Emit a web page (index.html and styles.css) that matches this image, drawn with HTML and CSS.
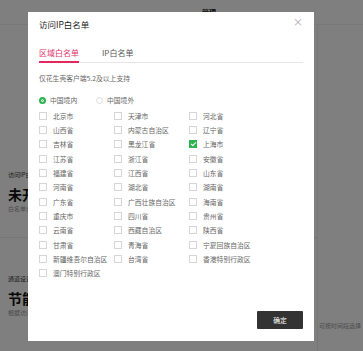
FILE: index.html
```html
<!DOCTYPE html>
<html lang="zh-CN">
<head>
  <meta charset="UTF-8" />
  <meta name="viewport" content="width=device-width, initial-scale=1" />
  <title>访问IP白名单</title>
  <link rel="stylesheet" href="styles.css">
</head>
<body>

  <div class="page">
    <header class="topbar">
      <span class="topbar-link">管理</span>
    </header>
    <div class="page-body">
      <main class="content">
        <section class="panel panel-first">
          <div class="panel-label">访问IP白名单</div>
          <div class="panel-value">未开启</div>
          <div class="panel-desc">白名单未开启</div>
        </section>
        <section class="panel">
          <div class="panel-label">通道设置</div>
          <div class="panel-value">节能模式</div>
          <div class="panel-desc">根据访问量调整</div>
        </section>
      </main>
      <aside class="side">
        <div class="side-desc">可按时间段选择</div>
      </aside>
    </div>
  </div>

  <div class="mask">
    <div class="modal">
      <div class="modal-head">
        <span class="modal-title">访问IP白名单</span>
        <span class="modal-close">×</span>
      </div>

      <div class="tabs">
        <span class="tab active">区域白名单</span>
        <span class="tab">IP白名单</span>
      </div>

      <p class="note">仅花生壳客户端5.2及以上支持</p>

      <div class="radios">
        <label class="radio checked"><i></i>中国境内</label>
        <label class="radio"><i></i>中国境外</label>
      </div>

      <div class="region-grid" id="regions"></div>

      <div class="modal-foot">
        <button class="btn">确定</button>
      </div>
    </div>
  </div>

  <script>
    // province list, filled row by row
    const regions = [
      '北京市', '天津市', '河北省',
      '山西省', '内蒙古自治区', '辽宁省',
      '吉林省', '黑龙江省', '上海市',
      '江苏省', '浙江省', '安徽省',
      '福建省', '江西省', '山东省',
      '河南省', '湖北省', '湖南省',
      '广东省', '广西壮族自治区', '海南省',
      '重庆市', '四川省', '贵州省',
      '云南省', '西藏自治区', '陕西省',
      '甘肃省', '青海省', '宁夏回族自治区',
      '新疆维吾尔自治区', '台湾省', '香港特别行政区',
      '澳门特别行政区'
    ];
    const selected = ['上海市'];

    const grid = document.getElementById('regions');
    regions.forEach(name => {
      const item = document.createElement('label');
      item.className = 'check' + (selected.includes(name) ? ' checked' : '');
      item.innerHTML = '<i></i><span></span>';
      item.querySelector('span').textContent = name;
      grid.appendChild(item);
    });
  </script>

</body>
</html>
```

FILE: styles.css
```css
body {
  margin: 0;
  font-family: "Noto Sans CJK SC", "Noto Sans", sans-serif;
  color: #333;
  background: #fff;
  width: 363px;
  height: 351px;
  overflow: hidden;
}

/* page behind the dialog */

.page {
  height: 351px;
  display: flex;
  flex-direction: column;
}

.topbar {
  height: 25px;
  border-bottom: 1px solid #f0f0f0;
  box-sizing: border-box;
  padding-left: 202px;
  display: flex;
  align-items: center;
}

.topbar-link {
  font-size: 7px;
  font-weight: 700;
  color: #222;
}

.page-body {
  flex: 1;
  display: flex;
}

.content {
  width: 317px;
  padding-top: 145px;
}

.panel {
  padding: 0 0 24px 8px;
}

.panel-first {
  border-bottom: 1px solid #eee;
  margin-bottom: 36px;
}

.panel-label {
  font-size: 6px;
  line-height: 10px;
  color: #333;
}

.panel-value {
  font-size: 14px;
  line-height: 20px;
  font-weight: 700;
  color: #111;
  margin-top: 4px;
}

.panel-desc {
  font-size: 6px;
  line-height: 9px;
  color: #999;
}

.side {
  flex: 1;
  border-left: 1px solid #eee;
  padding-top: 296px;
}

.side-desc {
  font-size: 6px;
  color: #999;
  padding-left: 1px;
}

/* dialog */

.mask {
  position: fixed;
  inset: 0;
  background: rgba(0, 0, 0, 0.5);
}

.modal {
  position: absolute;
  left: 28px;
  top: 12px;
  width: 286px;
  height: 329px;
  box-sizing: border-box;
  background: #fff;
  padding: 7px 11px 12px;
  display: flex;
  flex-direction: column;
}

.modal-head {
  display: flex;
  justify-content: space-between;
  align-items: center;
  height: 10px;
}

.modal-title {
  font-size: 8.5px;
  line-height: 10px;
  color: #222;
}

.modal-close {
  font-size: 10px;
  line-height: 10px;
  color: #aaa;
  margin-top: -4px;
}

.tabs {
  display: flex;
  gap: 23px;
  margin-top: 19px;
  border-bottom: 1px solid #e6e6e6;
}

.tab {
  font-size: 8px;
  line-height: 10px;
  color: #555;
  padding-bottom: 3px;
  margin-bottom: -1px;
  border-bottom: 2px solid transparent;
}

.tab.active {
  color: #e0336b;
  border-bottom-color: #e3285e;
}

.note {
  margin: 10px 0 0;
  font-size: 6.8px;
  line-height: 10px;
  color: #666;
}

.radios {
  display: flex;
  gap: 13px;
  margin-top: 12px;
  height: 10px;
}

.radio {
  display: flex;
  align-items: center;
  gap: 4px;
  font-size: 6.8px;
  color: #666;
  width: 44px;
}

.radio i {
  width: 7px;
  height: 7px;
  border-radius: 50%;
  border: 1px solid #ddd;
  box-sizing: border-box;
}

.radio.checked i {
  border: 2px solid #2db34f;
  background: #2db34f;
  box-shadow: inset 0 0 0 1px #fff;
}

.region-grid {
  display: grid;
  grid-template-columns: 75px 75px 75px;
  grid-auto-rows: 14.35px;
  margin-top: 3.5px;
}

.check {
  display: flex;
  align-items: center;
  gap: 6px;
  font-size: 6.8px;
  color: #666;
  white-space: nowrap;
}

.check i {
  width: 8px;
  height: 8px;
  border: 1px solid #d6d6d6;
  box-sizing: border-box;
  position: relative;
}

.check.checked i {
  background: #2db34f;
  border-color: #2db34f;
}

.check.checked i::after {
  content: "";
  position: absolute;
  left: 2px;
  top: 0;
  width: 2px;
  height: 4px;
  border: solid #fff;
  border-width: 0 1px 1px 0;
  transform: rotate(45deg);
}

.modal-foot {
  margin-top: auto;
  display: flex;
  justify-content: flex-end;
}

.btn {
  width: 46px;
  height: 18px;
  background: #333;
  color: #fff;
  border: none;
  border-radius: 1px;
  font-family: inherit;
  font-size: 6.8px;
  padding: 0;
  cursor: pointer;
}
```
